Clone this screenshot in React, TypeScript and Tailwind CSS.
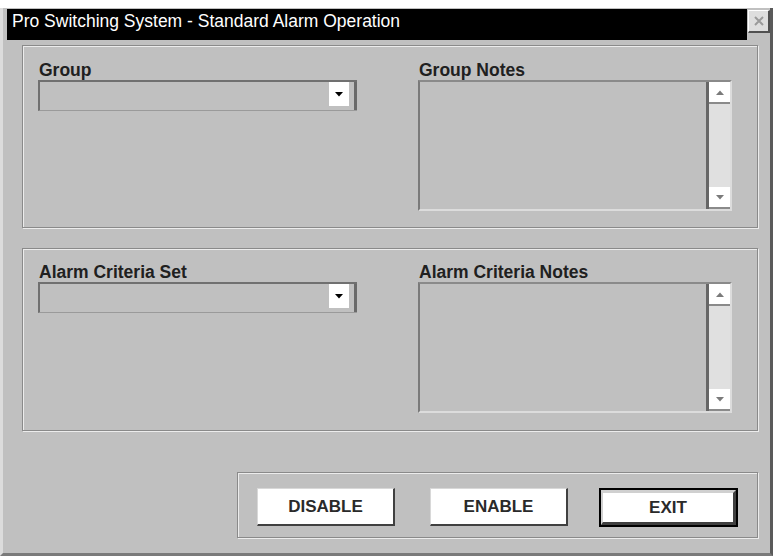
const FONT = { fontFamily: '"Liberation Sans", Arial, sans-serif' }

function ArrowDown({ color = '#000000' }: { color?: string }) {
  return (
    <svg width="8" height="5" viewBox="0 0 8 5" aria-hidden="true">
      <path d="M0 0 H8 L4 4.5 Z" fill={color} />
    </svg>
  )
}

function ArrowUp({ color = '#000000' }: { color?: string }) {
  return (
    <svg width="8" height="5" viewBox="0 0 8 5" aria-hidden="true">
      <path d="M0 5 H8 L4 0.5 Z" fill={color} />
    </svg>
  )
}

function Label({ children }: { children: string }) {
  return <div className="ml-[1px] h-[19px] text-[17.5px] font-bold leading-[19px] text-[#202020]">{children}</div>
}

function Dropdown() {
  return (
    <div className="flex h-[31px] w-[319px] border-t-2 border-l-2 border-b border-t-[#707070] border-l-[#707070] border-b-[#9a9a9a] bg-[#c0c0c0]">
      <div className="flex-1" />
      <div className="flex h-[28px] w-[25px] flex-col">
        <div className="flex h-[24px] w-[20px] items-center justify-center bg-white">
          <ArrowDown />
        </div>
      </div>
      <div className="w-[3px] bg-[#6a6a6a]" />
    </div>
  )
}

function ScrollButton({ up }: { up?: boolean }) {
  return (
    <div className="flex h-[22px] items-center justify-center border-b-2 border-[#8a8a8a] bg-white">
      {up ? <ArrowUp color="#7a7a7a" /> : <ArrowDown color="#7a7a7a" />}
    </div>
  )
}

function NotesBox() {
  return (
    <div className="flex h-[131px] w-[314px] border-t-2 border-l-2 border-b-2 border-r-2 border-t-[#8a8a8a] border-l-[#7a7a7a] border-b-[#dcdcdc] border-r-[#dcdcdc] bg-[#c0c0c0]">
      <div className="flex-1" />
      <div className="w-[3px] bg-[#666666]" />
      <div className="flex w-[21px] flex-col bg-[#e0e0e0]">
        <ScrollButton up />
        <div className="flex-1" />
        <ScrollButton />
      </div>
    </div>
  )
}

function Panel({ left, right, pt }: { left: string; right: string; pt: string }) {
  return (
    <div
      className={`flex h-[183px] border border-[#8a8a8a] pl-[15px] shadow-[inset_1px_1px_0_#ececec,1px_1px_0_#ececec] ${pt}`}
    >
      <div className="w-[380px]">
        <Label>{left}</Label>
        <Dropdown />
      </div>
      <div>
        <Label>{right}</Label>
        <NotesBox />
      </div>
    </div>
  )
}

function ActionButton({ label, className = '' }: { label: string; className?: string }) {
  return (
    <button
      type="button"
      className={`flex h-[38px] w-[138px] items-center justify-center border-t border-l border-r-2 border-b-2 border-t-[#d8d8d8] border-l-[#d8d8d8] border-r-[#404040] border-b-[#404040] bg-white text-[17px] font-bold text-[#2a2a2a] ${className}`}
    >
      {label}
    </button>
  )
}

export default function App() {
  return (
    <div className="h-[556px] w-[773px] overflow-hidden bg-white pt-[8px]" style={FONT}>
      <div className="flex h-[548px] flex-col border-l-[3px] border-r-[3px] border-b-[3px] border-l-[#dcdcdc] border-r-[#5a5a5a] border-b-[#7a7a7a] bg-[#c0c0c0]">
        <div className="flex h-[32px] items-start">
          <div className="ml-[4px] mt-[1px] h-[31px] w-[740px] bg-black pl-[5px] pt-[2px] text-[17.5px] leading-[20px] text-white">
            Pro Switching System - Standard Alarm Operation
          </div>
          <div className="ml-[1px] mt-[2px] flex h-[23px] w-[22px] items-center justify-center border-t border-l border-r-2 border-b-2 border-t-white border-l-white border-r-[#505050] border-b-[#505050] bg-[#dedede]">
            <svg width="10" height="10" viewBox="0 0 10 10" aria-hidden="true">
              <path d="M1 1 L9 9 M9 1 L1 9" stroke="#9a9a9a" strokeWidth="2" />
            </svg>
          </div>
        </div>

        <div className="flex flex-1 flex-col pl-[19px] pr-[12px] pt-[5px]">
          <Panel left="Group" right="Group Notes" pt="pt-[15px]" />
          <div className="mt-[20px]">
            <Panel left="Alarm Criteria Set" right="Alarm Criteria Notes" pt="pt-[14px]" />
          </div>

          <div className="ml-[215px] mt-[41px] flex h-[66px] w-[521px] items-start border border-[#8a8a8a] pl-[19px] pt-[15px] shadow-[inset_1px_1px_0_#ececec,1px_1px_0_#ececec]">
            <ActionButton label="DISABLE" />
            <ActionButton label="ENABLE" className="ml-[35px]" />
            <div className="ml-[31px] h-[39px] w-[139px] border-2 border-black">
              <div className="flex h-full w-full items-center justify-center border-t-[3px] border-l-[2px] border-r-[3px] border-b-[3px] border-t-[#d0d0d0] border-l-[#d0d0d0] border-r-[#404040] border-b-[#404040] bg-white text-[17px] font-bold text-[#2a2a2a]">
                EXIT
              </div>
            </div>
          </div>
        </div>
      </div>
    </div>
  )
}
